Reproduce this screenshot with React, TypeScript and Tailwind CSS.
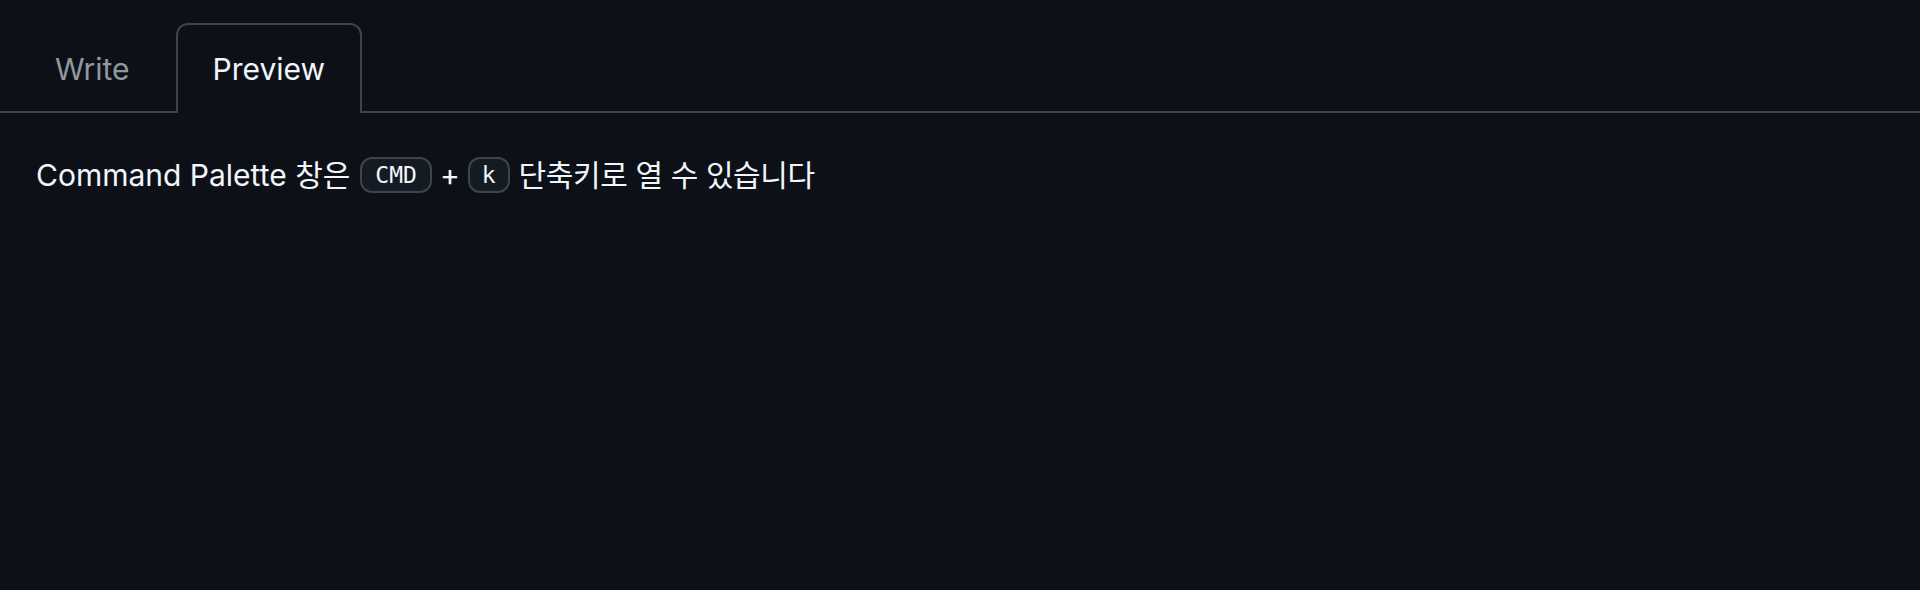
export default function App() {
  const sans = { fontFamily: 'Inter, "Noto Sans CJK KR", sans-serif' };
  const mono = { fontFamily: '"DejaVu Sans Mono", monospace' };
  return (
    <div className="w-[1920px] h-[590px] bg-[#0d1117] text-[#f0f6fc] overflow-hidden" style={sans}>
      <div className="flex items-end h-[113px] border-b-2 border-[#3d444d] pl-[20px] gap-[11px]">
        <div className="h-[88px] px-[35px] flex items-center text-[30px] text-[#9198a1] mb-[-2px]">Write</div>
        <div className="h-[90px] px-[35px] flex items-center text-[30px] text-[#f0f6fc] bg-[#0d1117] border-2 border-b-0 border-[#3d444d] rounded-t-[12px] mb-[-2px]">Preview</div>
      </div>
      <div className="px-[36px] pt-[38px] text-[30px] leading-[48px] flex items-center">
        <span>Command Palette 창은</span>
        <kbd className="ml-[10px] inline-flex items-center h-[36px] px-[13px] text-[23px] leading-[20px] bg-[#151b23] border-2 border-[#3d444d] rounded-[12px] text-[#f0f6fc]" style={mono}>CMD</kbd>
        <span className="mx-[8px]">+</span>
        <kbd className="inline-flex items-center h-[36px] px-[12px] text-[23px] leading-[20px] bg-[#151b23] border-2 border-[#3d444d] rounded-[12px] text-[#f0f6fc]" style={mono}>k</kbd>
        <span className="ml-[9px] tracking-[-0.4px]">단축키로 열 수 있습니다</span>
      </div>
    </div>
  );
}
